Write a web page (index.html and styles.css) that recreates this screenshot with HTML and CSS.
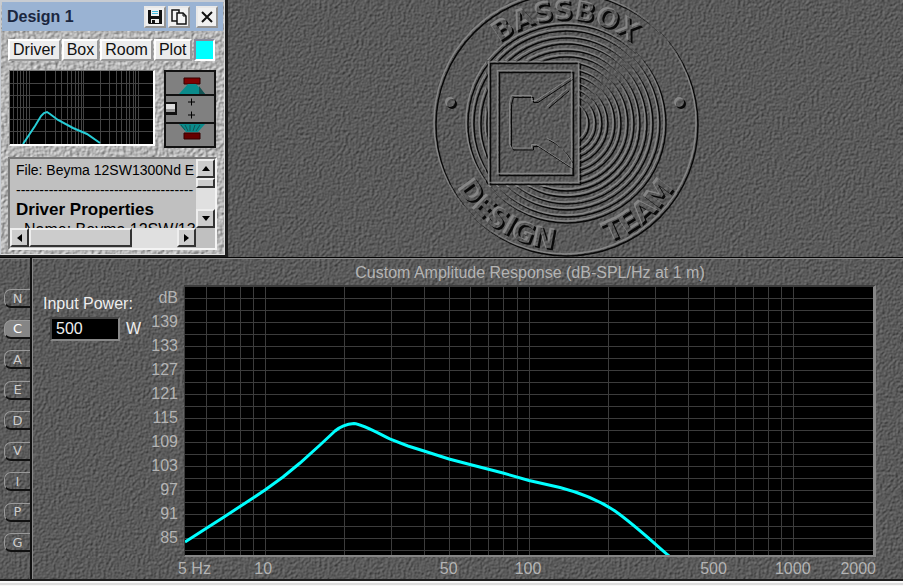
FILE: index.html
```html
<!DOCTYPE html>
<html lang="en">
<head>
<meta charset="utf-8">
<title>Design 1</title>
<link rel="stylesheet" href="styles.css">
</head>
<body>
<main class="app">
  <section class="desk">
    <article class="design">
      <header class="titlebar">
        <h1>Design 1</h1>
        <button class="icon-btn" aria-label="Save">
          <svg width="16" height="16" viewBox="0 0 16 16"><path d="M1 1h14v14H2l-1-1z" fill="#111"/><path d="M4 1h8v6H4z" fill="#eee"/><path d="M5 2h6v1H5zM5 4h6v1H5z" fill="#4bd"/><path d="M4 10h8v4H4z" fill="#eee"/><path d="M5 11h3v3H5z" fill="#111"/></svg>
        </button>
        <button class="icon-btn" aria-label="Copy">
          <svg width="16" height="16" viewBox="0 0 16 16" fill="#f4f4f4" stroke="#111" stroke-width="1.5"><path d="M1 1h7v11H1z"/><path d="M6 4h6l3 3v8H6z"/><path d="M12 4v3h3" fill="none" stroke-width="1"/></svg>
        </button>
        <button class="icon-btn close" aria-label="Close">
          <svg width="16" height="16" viewBox="0 0 16 16"><path d="M3 3l10 10M13 3L3 13" stroke="#111" stroke-width="2"/></svg>
        </button>
      </header>
      <nav class="modes">
        <button>Driver</button><button>Box</button><button>Room</button><button>Plot</button>
        <button class="swatch" aria-label="Line colour"></button>
      </nav>
      <div class="previews">
        <svg class="mini" viewBox="10 72 143 73" preserveAspectRatio="none">
          <path class="mini-grid" d="M13.5 72v73M17.5 72v73M20.5 72v73M23.5 72v73M26.5 72v73M29.5 72v73M45.5 72v73M55.5 72v73M61.5 72v73M67.5 72v73M71.5 72v73M75.5 72v73M78.5 72v73M81.5 72v73M83.5 72v73M100.5 72v73M109.5 72v73M116.5 72v73M121.5 72v73M126.5 72v73M129.5 72v73M133.5 72v73M135.5 72v73M138.5 72v73M10 84.500h143M10 96.500h143M10 108.500h143M10 120.500h143M10 132.500h143"/>
          <path class="mini-curve" d="M23 145L29 136 35 127 41 117 44 114 47 113 50 115 58 121 73 129 87 135 100 144"/>
        </svg>
        <svg class="cabinet" width="52" height="78" viewBox="0 0 52 78">
          <path d="M0 0h52v78H0z" fill="#111"/>
          <path d="M2 2h48v22H2zM2 26h48v26H2zM2 54h48v22H2z" fill="#808080"/>
          <path d="M20 8h16v6H20z" fill="#800000" stroke="#300"/>
          <path d="M24 14h8l9 10H15z" fill="#0b8b8b"/><path d="M35 16l6 8h-6z" fill="#145454"/>
          <path d="M15 54h26l-7 8H22z" fill="#0b8b8b"/><path d="M17 55l4 5M21 55l3 6M26 55v6M31 55l-2 6M36 55l-4 6" stroke="#145454"/>
          <path d="M20 63h16v6H20z" fill="#600" stroke="#300"/>
          <path d="M2 32h11v13H2z" fill="#111"/><path d="M2 34h9v5H2z" fill="#ddd"/><path d="M2 39h9v3H2z" fill="#999"/>
          <path d="M24 32h7M27.500 28.500v7M24 45h7M27.500 41.500v7" stroke="#000"/>
        </svg>
      </div>
      <div class="notes">
        <div class="notes-text">
          <p>File: Beyma 12SW1300Nd E</p>
          <p class="rule">--------------------------------------</p>
          <h2>Driver Properties</h2>
          <p class="item">Name: Beyma 12SW/1300Nd</p>
        </div>
        <div class="vbar">
          <button aria-label="Scroll up"><svg width="8" height="5" viewBox="0 0 8 5"><path d="M4 0l4 5H0z"/></svg></button>
          <span class="thumb"></span><span class="track"></span>
          <button aria-label="Scroll down"><svg width="8" height="5" viewBox="0 0 8 5"><path d="M4 5l4-5H0z"/></svg></button>
        </div>
        <div class="hbar">
          <button aria-label="Scroll left"><svg width="5" height="8" viewBox="0 0 5 8"><path d="M0 4l5-4v8z"/></svg></button>
          <span class="thumb"></span><span class="track"></span>
          <button aria-label="Scroll right"><svg width="5" height="8" viewBox="0 0 5 8"><path d="M5 4L0 0v8z"/></svg></button>
        </div>
      </div>
    </article>
    <div class="brand">
      <svg width="276" height="257" viewBox="428 0 276 257" role="img" aria-label="BassBox Design Team">
        <defs>
          <filter id="emboss" filterUnits="userSpaceOnUse" x="420" y="-20" width="292" height="290" color-interpolation-filters="sRGB">
            <feOffset in="SourceAlpha" dx="-1" dy="-1" result="a"/>
            <feOffset in="SourceAlpha" dx="1" dy="1" result="b"/>
            <feFlood flood-color="#868686"/><feComposite in2="a" operator="in"/><feComposite in2="b" operator="out" result="light"/>
            <feFlood flood-color="#080808"/><feComposite in2="b" operator="in"/><feComposite in2="a" operator="out" result="dark"/>
            <feMerge><feMergeNode in="light"/><feMergeNode in="dark"/></feMerge>
          </filter>
          <clipPath id="outside"><path clip-rule="evenodd" d="M420-20h292v290H420zM487 61v125h92V61z"/></clipPath>
          <path id="arc-top" d="M462 124A104 104 0 0 1 670 124"/>
          <path id="arc-bottom" d="M440 124A126 126 0 0 0 692 124"/>
        </defs>
        <g filter="url(#emboss)" fill="none" stroke="#000" stroke-width="1.5">
          <circle cx="566" cy="124" r="131"/>
          <g clip-path="url(#outside)">
            <circle cx="566" cy="123" r="99"/><circle cx="566" cy="123" r="93"/><circle cx="566" cy="123" r="86"/><circle cx="566" cy="123" r="80"/><circle cx="566" cy="123" r="73"/><circle cx="566" cy="123" r="67"/><circle cx="566" cy="123" r="61"/><circle cx="566" cy="123" r="54"/><circle cx="566" cy="123" r="48"/><circle cx="566" cy="123" r="41"/><circle cx="566" cy="123" r="35"/><circle cx="566" cy="123" r="29"/><circle cx="566" cy="123" r="22"/>
          </g>
          <path d="M489.500 62.500h90v121h-90z"/><path d="M498.500 71.500h74v103h-74z"/>
          <path stroke-width="1" d="M572.500 72v6L537 101.500h-4.500v-5h-20l-2 7v42l2 3.500h20v-3.500h5L572 168v6M548 107l20-17M548 139q14 6 24 23"/>
          <g fill="#000" stroke="none">
            <circle cx="451" cy="103" r="5"/><circle cx="680" cy="103" r="5"/>
            <g class="seal">
              <text class="seal-top" text-anchor="middle"><textPath href="#arc-top" startOffset="50%">BASSBOX</textPath></text>
              <text text-anchor="middle"><textPath href="#arc-bottom" startOffset="32%">DESIGN</textPath></text>
              <text text-anchor="middle"><textPath href="#arc-bottom" startOffset="72%">TEAM</textPath></text>
            </g>
          </g>
        </g>
      </svg>
    </div>
  </section>

  <section class="response">
    <nav class="tabs">
      <button>N</button><button class="active">C</button><button>A</button><button>E</button><button>D</button><button>V</button><button>I</button><button>P</button><button>G</button>
    </nav>
    <div class="panel">
      <form class="power">
        <label for="watts">Input Power:</label>
        <div class="field"><input id="watts" value="500"><span>W</span></div>
      </form>
      <ol class="levels">
        <li>dB</li><li>139</li><li>133</li><li>127</li><li>121</li><li>115</li><li>109</li><li>103</li><li>97</li><li>91</li><li>85</li>
      </ol>
      <figure class="chart">
        <figcaption>Custom Amplitude Response (dB-SPL/Hz at 1 m)</figcaption>
        <svg class="plot" viewBox="185 287 688 268" preserveAspectRatio="none">
          <path class="grid" d="M206.500 287v268M224.500 287v268M240.500 287v268M253.500 287v268M265.500 287v268M344.500 287v268M391.500 287v268M424.500 287v268M449.500 287v268M470.500 287v268M488.500 287v268M503.500 287v268M517.500 287v268M529.500 287v268M608.500 287v268M655.500 287v268M688.500 287v268M714.500 287v268M735.500 287v268M753.500 287v268M768.500 287v268M781.500 287v268M793.500 287v268"/>
          <path class="grid" d="M185 298.500h688M185 310.500h688M185 322.500h688M185 334.500h688M185 346.500h688M185 358.500h688M185 370.500h688M185 382.500h688M185 394.500h688M185 406.500h688M185 418.500h688M185 430.500h688M185 442.500h688M185 454.500h688M185 466.500h688M185 478.500h688M185 490.500h688M185 502.500h688M185 514.500h688M185 526.500h688M185 538.500h688M185 550.500h688"/>
          <path class="curve" d="M185 542L206 528.500 224 517 240 506.500 253 498 265 490 283 477 300 463 320 445 335 431 C342 425 348 424 354 423.500 C362 424 378 433 391 439.500 L408 446 424 451 449 459 470 464.500 503 473 529 480.500 560 487.500 C585 494 600 501 615 511 C632 523 645 535 669 556"/>
        </svg>
        <ol class="freqs">
          <li>5 Hz</li><li>10</li><li>50</li><li>100</li><li>500</li><li>1000</li><li>2000</li>
        </ol>
      </figure>
    </div>
  </section>
  <div class="sill"></div>
</main>
</body>
</html>
```
FILE: styles.css
```css
:root {
  --rock: url("data:image/svg+xml,%3Csvg xmlns='http://www.w3.org/2000/svg' width='300' height='300'%3E%3Cfilter id='f' x='0' y='0' width='100%25' height='100%25' color-interpolation-filters='sRGB'%3E%3CfeTurbulence type='fractalNoise' baseFrequency='.38' numOctaves='2' seed='4' stitchTiles='stitch'/%3E%3CfeDiffuseLighting surfaceScale='.8' lighting-color='%23808080'%3E%3CfeDistantLight azimuth='225' elevation='45'/%3E%3C/feDiffuseLighting%3E%3C/filter%3E%3Crect width='300' height='300' filter='url(%23f)'/%3E%3C/svg%3E");
  --stone: url("data:image/svg+xml,%3Csvg xmlns='http://www.w3.org/2000/svg' width='300' height='300'%3E%3Cfilter id='f' x='0' y='0' width='100%25' height='100%25' color-interpolation-filters='sRGB'%3E%3CfeTurbulence type='fractalNoise' baseFrequency='.28' numOctaves='2' seed='9' stitchTiles='stitch'/%3E%3CfeDiffuseLighting surfaceScale='.9' lighting-color='%23f4f4f4'%3E%3CfeDistantLight azimuth='225' elevation='48'/%3E%3C/feDiffuseLighting%3E%3C/filter%3E%3Crect width='300' height='300' filter='url(%23f)'/%3E%3C/svg%3E");
}

* { box-sizing: border-box; }

body {
  margin: 0;
  background: #dcdcdc;
  font: 16px/20px "Liberation Sans", Arial, sans-serif;
}

h1, h2, p, ol, figure { margin: 0; padding: 0; }
ol { list-style: none; }
button, input { font: inherit; padding: 0; margin: 0; border-radius: 0; }
svg { display: block; flex: none; }

.app {
  display: flex;
  flex-direction: column;
  min-height: 100vh;
}

.desk {
  display: flex;
  background: #585858 var(--rock);
}

/* design window */
.design {
  flex: none;
  width: 228px;
  padding: 2px 2px 5px;
  background: #b4b4b4 var(--stone);
  border: solid #1c1c1c;
  border-width: 0 3px 2px 0;
  box-shadow: inset 1px 2px 0 #c8ccd2, inset -1px -1px 0 #ddd;
}

.titlebar {
  display: flex;
  align-items: center;
  gap: 2px;
  height: 29px;
  padding: 1px 5px 0 5px;
  background: #9ab3d3;
}

.titlebar h1 {
  flex: 1;
  font-size: 16px;
  color: #1b2740;
}

.icon-btn {
  display: grid;
  place-items: center;
  width: 22px;
  height: 22px;
  background: #f0f0f0;
  border: 2px outset #e8e8e8;
}

.close { margin-left: 4px; }

.modes {
  display: flex;
  gap: 1px;
  padding: 8px 8px 0 6px;
}

.modes button {
  height: 22px;
  padding: 0 3px;
  color: #111;
  background: #ececec;
  border: 2px solid;
  border-color: #fff #999 #999 #fff;
  line-height: 16px;
}

.modes .swatch {
  width: 21px;
  margin-left: auto;
  background: #0ff;
  border-color: #889 #fff #fff #889;
}

.previews {
  display: flex;
  justify-content: space-between;
  align-items: flex-start;
  padding: 9px 7px 0;
}

.mini {
  width: 146px;
  height: 76px;
  background: #000;
  border: solid;
  border-width: 1px 2px 2px 1px;
  border-color: #777 #fff #fff #777;
}

.mini-grid { stroke: #444; fill: none; }
.mini-curve { stroke: #27cdd6; stroke-width: 2; fill: none; }

.notes {
  display: grid;
  grid-template: 69px 20px / 1fr 19px;
  margin: 9px 6px 0 6px;
  background: #c0c0c0;
  border: 2px solid;
  border-color: #777 #f4f4f4 #f4f4f4 #777;
}

.notes-text {
  overflow: hidden;
  padding: 1px 0 0 6px;
  white-space: nowrap;
  color: #000;
}

.notes-text p { font-size: 14px; }
.notes-text h2 { font-size: 17px; }
.notes-text .item { font-size: 16px; padding-left: 8px; }

.vbar, .hbar { display: flex; }
.vbar { flex-direction: column; }

.vbar button, .hbar button, .thumb {
  display: grid;
  place-items: center;
  flex: none;
  width: 19px;
  height: 19px;
  background: #ccc;
  border: 2px solid;
  border-color: #eee #333 #333 #eee;
}

.vbar .thumb { height: 10px; }
.hbar .thumb { width: 103px; }
.track { flex: 1; background: #e0e0e0; }

/* embossed seal */
.brand {
  flex: 1;
  display: flex;
  justify-content: center;
  overflow: hidden;
}

.seal { font: bold 28px "DejaVu Sans", sans-serif; }
.seal-top { font-size: 27px; }

/* response panel */
.response {
  flex: 1;
  display: flex;
  background: #585858 var(--rock);
  border-top: 1px solid #050505;
  border-bottom: 2px solid #1c1c1c;
  box-shadow: inset 0 1px 0 #8a8a8a;
}

.sill {
  height: 5px;
  background: #dcdcdc;
  border-top: 2px solid #f8f8f8;
  border-bottom: 1px solid #f8f8f8;
}

.tabs {
  display: flex;
  flex-direction: column;
  justify-content: space-between;
  width: 32px;
  padding: 31px 0 27px 4px;
  border-right: 2px solid #111;
}

.tabs button {
  height: 19px;
  color: #ccc;
  background: transparent;
  border: 1px solid;
  border-color: #999 transparent #111 #999;
  border-width: 1px 0 2px 1px;
  border-radius: 7px 0 0 7px;
  font: 13px/15px "DejaVu Sans", sans-serif;
}

.tabs .active {
  color: #fff;
  background: #858585;
}

.panel {
  flex: 1;
  display: flex;
  padding: 5px 27px 0 10px;
  border-left: 1px solid #888;
}

.power {
  width: 90px;
  padding-top: 31px;
  color: #eee;
  white-space: nowrap;
}

.field {
  display: flex;
  align-items: center;
  gap: 6px;
  padding: 3px 0 0 7px;
}

.field input {
  width: 70px;
  height: 24px;
  padding: 0 4px;
  color: #eee;
  background: #000;
  border: 2px solid;
  border-color: #444 #888 #888 #444;
}

.levels {
  width: 45px;
  padding-top: 23px;
  color: #b4b4b4;
  text-align: right;
  line-height: 24px;
}

.chart {
  flex: 1;
  display: flex;
  flex-direction: column;
  min-width: 0;
  margin-left: 6px;
  color: #b4b4b4;
}

figcaption {
  padding-bottom: 2px;
  text-align: center;
}

.plot {
  width: 100%;
  height: 272px;
  background: #000;
  border: solid;
  border-width: 2px 3px 2px 1px;
  border-color: #3c3c3c #858585 #858585 #3c3c3c;
}

.grid { stroke: #3c3c3c; fill: none; }
.curve { stroke: #0ff; stroke-width: 3; fill: none; }

.freqs {
  display: grid;
  grid-template-columns: 79fr 185fr 79fr 185fr 79fr 83fr;
  padding-top: 2px;
  white-space: nowrap;
}

.freqs li {
  grid-row: 1;
  width: max-content;
  transform: translateX(-50%);
}

.freqs li:first-child {
  grid-column: 1;
  transform: none;
  margin-left: -6px;
}

.freqs li:nth-child(2) { grid-column: 2; }
.freqs li:nth-child(3) { grid-column: 3; }
.freqs li:nth-child(4) { grid-column: 4; }
.freqs li:nth-child(5) { grid-column: 5; }
.freqs li:nth-child(6) { grid-column: 6; }

.freqs li:last-child {
  grid-column: 6;
  justify-self: end;
  transform: none;
}
```
